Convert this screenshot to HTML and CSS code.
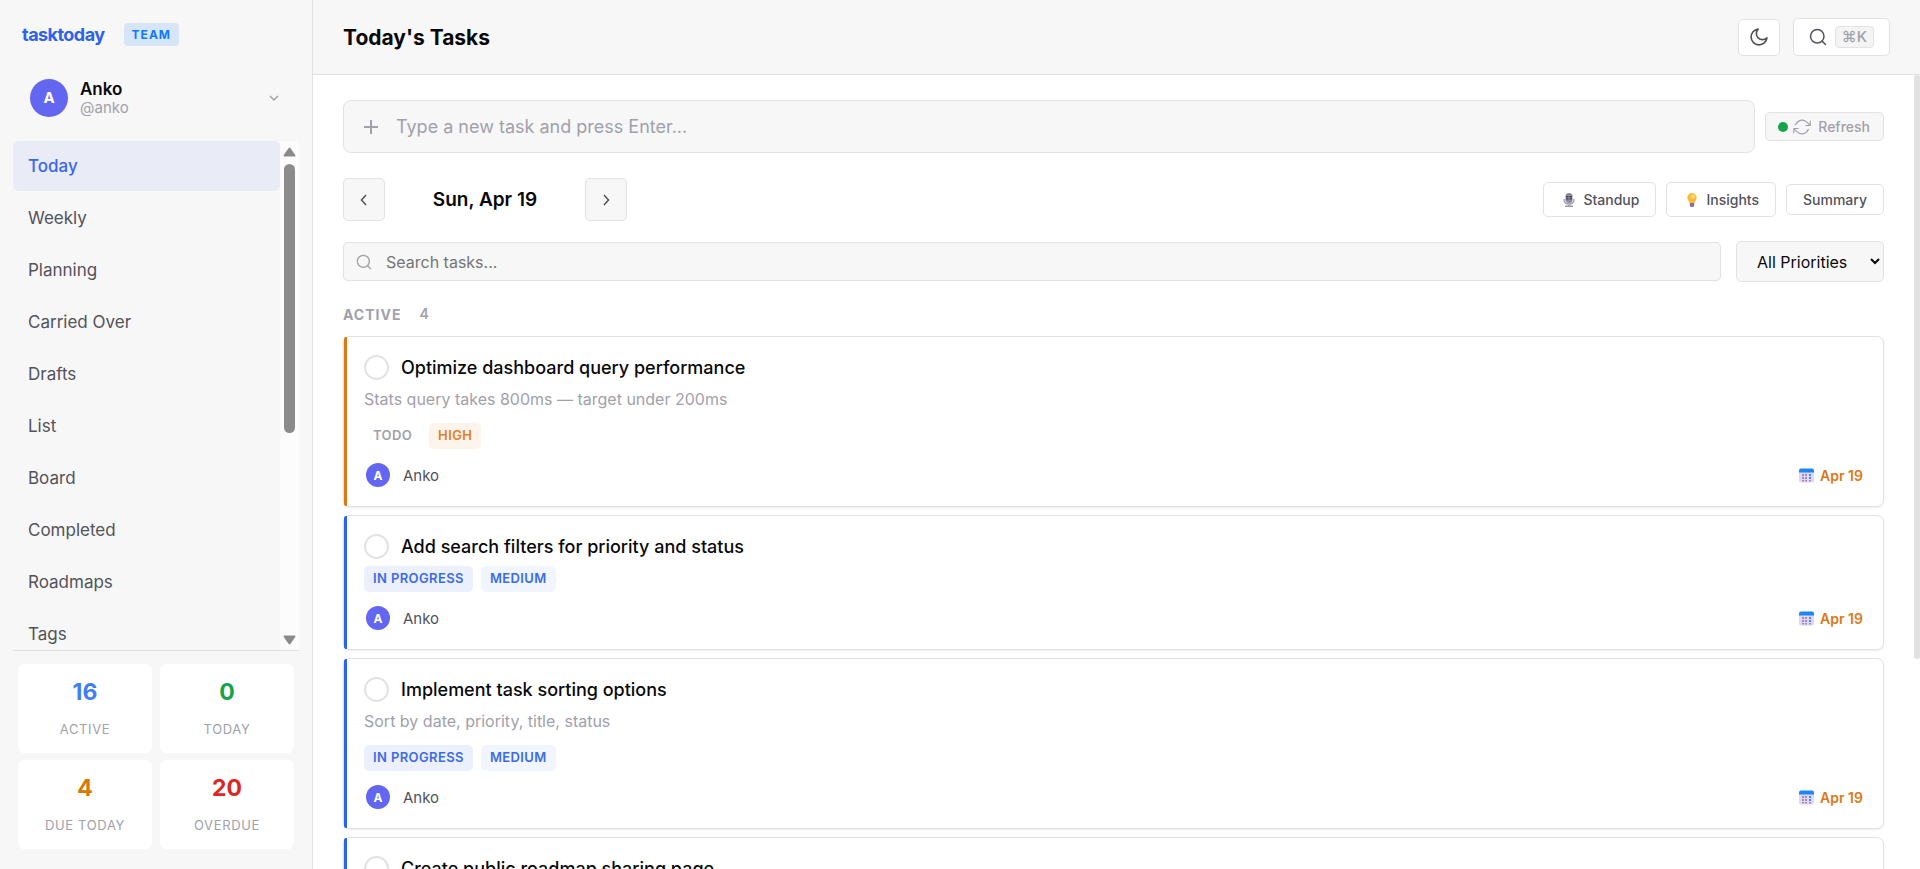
FILE: index.html
```html
<!DOCTYPE html>
<html lang="en">
<head>
    <meta charset="utf-8">
    <meta name="viewport" content="width=device-width, initial-scale=1.0">
    <title>Today's Tasks - tasktoday</title>
    <link rel="stylesheet" href="styles.css">
</head>
<body>

<!-- shared icons -->
<svg class="sprite" aria-hidden="true">
    <symbol id="i-search" viewBox="0 0 24 24"><circle cx="11" cy="11" r="9"/><path d="M22 22l-4.500-4.500"/></symbol>
    <symbol id="i-cal" viewBox="0 0 15 15">
        <rect x="0" y="1" width="15" height="13.500" rx="2" fill="#e3d5f5"/>
        <path d="M0 4.500V2.500Q0 .5 2 .5h11q2 0 2 2v2z" fill="#1b86f5"/>
        <path d="M3 6h2v2H3zM6 6h2v2H6zM3 9h2v2H3zM6 9h2v2H6zM3 12h2v1.500H3zM6 12h2v1.500H6zM10 12h2v1.500h-2z" fill="#9d8fb5"/>
        <path d="M10 6h2v2h-2zM10 9h2v2h-2z" fill="#3f8ef0"/>
    </symbol>
</svg>

<div class="app">

<aside class="sidebar">
    <div class="brand">
        <a href="#" class="logo">tasktoday</a>
        <span class="plan">TEAM</span>
    </div>

    <button class="user" type="button">
        <span class="avatar">A</span>
        <span class="user-info">
            <span class="user-name">Anko</span>
            <span class="user-handle">@anko</span>
        </span>
        <svg class="chev" width="10" height="10" viewBox="0 0 10 10"><path d="M1 3l4 4 4-4"/></svg>
    </button>

    <div class="nav-wrap">
        <nav class="nav">
            <a href="#" class="nav-item active">Today</a>
            <a href="#" class="nav-item">Weekly</a>
            <a href="#" class="nav-item">Planning</a>
            <a href="#" class="nav-item">Carried Over</a>
            <a href="#" class="nav-item">Drafts</a>
            <a href="#" class="nav-item">List</a>
            <a href="#" class="nav-item">Board</a>
            <a href="#" class="nav-item">Completed</a>
            <a href="#" class="nav-item">Roadmaps</a>
            <a href="#" class="nav-item">Tags</a>
        </nav>
        <div class="scrollbar">
            <svg width="13" height="10" viewBox="0 0 13 10"><path d="M6.500 1.500l5 7h-10z"/></svg>
            <div class="scroll-track"><div class="scroll-thumb"></div></div>
            <svg width="13" height="10" viewBox="0 0 13 10"><path d="M6.500 8.500l5-7h-10z"/></svg>
        </div>
    </div>

    <div class="stats">
        <div class="stat"><span class="num blue">16</span><span class="stat-label">ACTIVE</span></div>
        <div class="stat"><span class="num green">0</span><span class="stat-label">TODAY</span></div>
        <div class="stat"><span class="num orange">4</span><span class="stat-label">DUE TODAY</span></div>
        <div class="stat"><span class="num red">20</span><span class="stat-label">OVERDUE</span></div>
    </div>
</aside>

<main class="main">
    <header class="header">
        <h1>Today's Tasks</h1>
        <div class="header-btns">
            <button class="btn theme-btn" type="button" aria-label="Toggle theme">
                <svg class="line" width="20" height="20" viewBox="0 0 24 24"><path d="M21.500 13A9.500 9.500 0 1 1 11 2.500 7.400 7.400 0 0 0 21.500 13z"/></svg>
            </button>
            <button class="btn search-btn" type="button" aria-label="Search">
                <svg class="line" width="18" height="18"><use href="#i-search"/></svg>
                <kbd>⌘K</kbd>
            </button>
        </div>
    </header>

    <div class="body">
    <div class="content">
        <div class="row add-row">
            <div class="add-box">
                <svg class="plus" width="14" height="14" viewBox="0 0 14 14"><path d="M7 0v14M0 7h14"/></svg>
                <input type="text" class="add-input" aria-label="New task" placeholder="Type a new task and press Enter...">
            </div>
            <button class="btn refresh" type="button">
                <span class="dot"></span>
                <svg class="line" width="18" height="18" viewBox="0 0 24 24"><path d="M23 4v6h-6M1 20v-6h6M3.500 9a9 9 0 0 1 14.900-3.400L23 10M1 14l4.600 4.400A9 9 0 0 0 20.500 15"/></svg>
                <span>Refresh</span>
            </button>
        </div>

        <div class="row date-row">
            <button class="btn arrow" type="button" aria-label="Previous day"><svg width="8" height="12" viewBox="0 0 8 12"><path d="M6 1L1.500 6 6 11"/></svg></button>
            <h2 class="date">Sun, Apr 19</h2>
            <button class="btn arrow" type="button" aria-label="Next day"><svg width="8" height="12" viewBox="0 0 8 12"><path d="M2 1l4.500 5L2 11"/></svg></button>
            <div class="tools">
                <button class="btn tool" type="button">
                    <svg width="14" height="16" viewBox="0 0 14 16">
                        <path d="M2 7q0 5 5 5t5-5M7 12v2" fill="none" stroke="#a9a3b5" stroke-width="1.500"/>
                        <rect x="3.500" y="1" width="7" height="10" rx="3.500" fill="#8d8799"/>
                        <path d="M4 4h6v3.500H4z" fill="#45405a"/>
                        <path d="M7 3v6M4 5.800h6" stroke="#a9a3b5" stroke-width=".7"/>
                        <path d="M3 13.500h8v1.500H3z" fill="#9c97a8"/>
                    </svg>
                    Standup
                </button>
                <button class="btn tool" type="button">
                    <svg width="14" height="16" viewBox="0 0 14 16">
                        <path d="M7 1a4.700 4.700 0 0 1 4.700 4.700c0 2.300-2 3.300-2.300 5.300H4.600C4.300 9 2.300 8 2.300 5.700A4.700 4.700 0 0 1 7 1z" fill="#fdb935"/>
                        <circle cx="8" cy="4.500" r="2" fill="#ffe07a"/>
                        <path d="M4.800 11h4.400v2.500Q9.200 15 7 15t-2.200-1.500z" fill="#8c6c9c"/>
                    </svg>
                    Insights
                </button>
                <button class="btn tool small" type="button">Summary</button>
            </div>
        </div>

        <div class="row filter-row">
            <div class="search-box">
                <svg class="line" width="16" height="16"><use href="#i-search"/></svg>
                <input type="search" class="search-input" aria-label="Search tasks" placeholder="Search tasks...">
            </div>
            <select class="priority-select" aria-label="Priority">
                <option>All Priorities</option>
                <option>High</option>
                <option>Medium</option>
                <option>Low</option>
            </select>
        </div>

        <div class="section-head"><h3>ACTIVE</h3><span class="count">4</span></div>

        <div class="tasks">
            <article class="task high">
                <label class="task-title"><input type="checkbox" class="check">Optimize dashboard query performance</label>
                <p class="desc">Stats query takes 800ms — target under 200ms</p>
                <div class="badges"><span class="badge todo">TODO</span><span class="badge b-high">HIGH</span></div>
                <div class="meta">
                    <span class="avatar tiny">A</span><span class="who">Anko</span>
                    <span class="due"><svg width="15" height="15"><use href="#i-cal"/></svg>Apr 19</span>
                </div>
            </article>

            <article class="task">
                <label class="task-title"><input type="checkbox" class="check">Add search filters for priority and status</label>
                <div class="badges"><span class="badge progress">IN PROGRESS</span><span class="badge b-medium">MEDIUM</span></div>
                <div class="meta">
                    <span class="avatar tiny">A</span><span class="who">Anko</span>
                    <span class="due"><svg width="15" height="15"><use href="#i-cal"/></svg>Apr 19</span>
                </div>
            </article>

            <article class="task">
                <label class="task-title"><input type="checkbox" class="check">Implement task sorting options</label>
                <p class="desc">Sort by date, priority, title, status</p>
                <div class="badges"><span class="badge progress">IN PROGRESS</span><span class="badge b-medium">MEDIUM</span></div>
                <div class="meta">
                    <span class="avatar tiny">A</span><span class="who">Anko</span>
                    <span class="due"><svg width="15" height="15"><use href="#i-cal"/></svg>Apr 19</span>
                </div>
            </article>

            <article class="task">
                <label class="task-title"><input type="checkbox" class="check">Create public roadmap sharing page</label>
            </article>
        </div>
    </div>
    <div class="page-scroll"><div class="page-thumb"></div></div>
    </div>
</main>

</div>
</body>
</html>
```
FILE: styles.css
```css
* {box-sizing: border-box;}
body {margin: 0; font-family: Inter, "Liberation Sans", sans-serif; font-size: 16px; color: #09090b; background: #fff;}
button, input, select {font-family: inherit;}
a {text-decoration: none;}
h1, h2, h3, p {margin: 0;}
svg {flex: none;}

.sprite {display: none;}
.line {fill: none; stroke: currentColor; stroke-width: 2; stroke-linecap: round; stroke-linejoin: round;}
.app {display: flex; height: 100vh; overflow: hidden;}

/* sidebar */
.sidebar {width: 313px; flex: none; display: flex; flex-direction: column; padding: 0 13px; background: #f7f7f7; border-right: 1px solid #e2e2e4;}
.brand {display: flex; align-items: center; gap: 19px; height: 68px; padding-left: 9px; flex: none;}
.logo {font-size: 18px; font-weight: 700; letter-spacing: -0.03em; color: #2f62ea;}
.plan {padding: 0 8px; line-height: 23px; border-radius: 4px; font-size: 12px; font-weight: 700; letter-spacing: 1px; color: #0d7bff; background: #d7e6f7;}
.user {display: flex; align-items: center; gap: 12px; height: 59px; margin-bottom: 14px; padding: 0 20px 0 17px; border: 0; background: none; text-align: left; flex: none;}
.avatar {display: flex; align-items: center; justify-content: center; width: 38px; height: 38px; border-radius: 50%; font-size: 15px; font-weight: 700; color: #fff; background: #6366f1; flex: none;}
.avatar.tiny {width: 24px; height: 24px; font-size: 12px;}
.user-info {display: flex; flex-direction: column; flex: 1;}
.user-name {font-size: 17px; line-height: 20px; font-weight: 600; color: #09090b;}
.user-handle {font-size: 15px; line-height: 18px; color: #a1a1aa;}
.chev {fill: none; stroke: #a1a1aa; stroke-width: 1.5;}

.nav-wrap {display: flex; flex: 1; min-height: 0; border-bottom: 1px solid #dfdfe1;}
.nav {display: flex; flex-direction: column; gap: 2px; flex: 1; overflow: hidden;}
.nav-item {padding: 0 15px; height: 50px; line-height: 50px; flex: none; border-radius: 6px; font-size: 17px; color: #52525b;}
.nav-item.active {color: #3b66e8; background: #e9ecf6; font-weight: 500;}
.scrollbar {display: flex; flex-direction: column; align-items: center; width: 19px; padding: 6px 0 5px; background: #fcfcfc; fill: #8b8b8b;}
.scrollbar svg {stroke: #8b8b8b; stroke-linejoin: round; stroke-width: 2;}
.scroll-track {flex: 1; width: 11px; padding: 7px 0;}
.scroll-thumb {height: 58%; border-radius: 6px; background: #8b8b8b;}

.stats {display: grid; grid-template-columns: 1fr 1fr; gap: 7px 8px; padding: 13px 5px 20px; flex: none;}
.stat {display: flex; flex-direction: column; align-items: center; height: 89px; padding-top: 13px; border-radius: 6px; background: #fff;}
.num {font-size: 23px; line-height: 30px; font-weight: 700;}
.stat-label {margin-top: 12px; font-size: 13px; line-height: 20px; letter-spacing: 0.05em; color: #a1a1aa;}
.blue {color: #3f7ff5;}
.green {color: #16a34a;}
.orange {color: #d97706;}
.red {color: #dc2626;}

/* header */
.main {flex: 1; min-width: 0; display: flex; flex-direction: column;}
.header {display: flex; align-items: center; justify-content: space-between; height: 75px; padding: 0 30px; background: #f7f7f7; border-bottom: 1px solid #e2e2e4; flex: none;}
h1 {font-size: 21px; font-weight: 700;}
.header-btns {display: flex; align-items: center; gap: 13px;}
.btn {display: flex; align-items: center; justify-content: center; padding: 0; border: 1px solid #e2e2e4; border-radius: 5px; color: #52525b; background: #fff;}
.theme-btn {width: 42px; height: 37px;}
.search-btn {gap: 8px; height: 38px; padding: 0 15px;}
kbd {padding: 0 6px; line-height: 20px; border: 1px solid #e2e2e4; border-radius: 4px; font-family: inherit; font-size: 15px; font-weight: 500; color: #a1a1aa; background: #f4f4f5;}

/* content */
.body {display: flex; flex: 1; min-height: 0;}
.content {flex: 1; min-width: 0; padding: 25px 30px 0; overflow: hidden;}
.page-scroll {width: 6px; flex: none;}
.page-thumb {height: 73.5%; border-radius: 4px; background: #e2e2e4;}
.row {display: flex; align-items: center;}
.add-row {gap: 10px;}
.add-box {display: flex; align-items: center; flex: 1; gap: 18px; height: 53px; padding: 0 20px; border: 1px solid #e2e2e4; border-radius: 8px; background: #f7f7f7;}
.plus {stroke: #a1a1aa; stroke-width: 2;}
.add-input, .search-input {flex: 1; min-width: 0; height: 30px; padding: 0; border: 0; outline: 0; background: none; color: #09090b;}
.add-input {font-size: 18px;}
.add-input::placeholder {color: #a1a1aa;}
.refresh {height: 29px; padding: 0 13px 0 12px; color: #a1a1aa; background: #f7f7f7; font-size: 14px; font-weight: 500;}
.refresh .line {margin: 0 7px 0 5px; stroke-width: 1.5;}
.dot {width: 10px; height: 10px; border-radius: 50%; background: #16a34a;}

.date-row {margin-top: 25px;}
.arrow {width: 42px; height: 43px; background: #f7f7f7;}
.arrow svg {fill: none; stroke: #52525b; stroke-width: 1.5;}
.date {width: 200px; text-align: center; font-size: 19px; font-weight: 600;}
.tools {display: flex; align-items: center; gap: 10px; margin-left: auto;}
.tool {gap: 7px; height: 35px; padding: 0 16px 0 18px; font-size: 14px; font-weight: 500;}
.tool.small {height: 31px; padding: 0 16px;}

.filter-row {gap: 15px; margin-top: 20px;}
.search-box {display: flex; align-items: center; flex: 1; gap: 14px; height: 39px; padding: 0 12px; border: 1px solid #e2e2e4; border-radius: 5px; color: #a1a1aa; background: #f7f7f7;}
.search-input {font-size: 16px;}
.priority-select {width: 148px; height: 41px; padding: 0 0 0 16px; border: 1px solid #e2e2e4; border-radius: 5px; font-size: 16px; color: #09090b; background: #f7f7f7;}

.section-head {display: flex; align-items: flex-start; gap: 18px; margin-top: 23px; height: 31px; color: #a1a1aa;}
h3 {font-size: 14px; line-height: 20px; font-weight: 700; letter-spacing: 1px;}
.count {font-size: 14px; line-height: 17px; font-weight: 600;}

.tasks {display: flex; flex-direction: column; gap: 8px;}
.task {position: relative; padding: 18px 20px 19px; border: 1px solid #e2e2e4; border-radius: 7px; background: #fff; box-shadow: 0 1px 2px rgba(0, 0, 0, 0.08);}
.task::before {content: ""; position: absolute; left: 0; top: 0; bottom: 0; width: 3px; border-radius: 2px 0 0 2px; background: #2b62ea;}
.task.high::before {background: #d97a16;}
.task-title {display: flex; align-items: center; gap: 12px; height: 25px; margin-bottom: 7px; font-size: 18px; line-height: 24px; font-weight: 500;}
.check {appearance: none; width: 25px; height: 25px; margin: 0; border: 2px solid #e2e2e4; border-radius: 50%; background: #fff;}
.check:checked {background: #2b62ea;}
.desc {margin-bottom: 12px; font-size: 16px; line-height: 24px; color: #a1a1aa;}
.badges {display: flex; gap: 8px; margin-bottom: 14px;}
.badge {padding: 0 9px; height: 26px; line-height: 25px; border-radius: 5px; font-size: 13px; font-weight: 600; letter-spacing: 0.03em;}
.todo {color: #a1a1aa;}
.b-high {color: #e37f1c; background: #fdf4eb;}
.progress {color: #3b6be8; background: #ebf0fc;}
.b-medium {color: #3b6be8; background: #f1f5fe;}
.meta {display: flex; align-items: center; gap: 13px; height: 24px; padding-left: 2px;}
.who {font-size: 15px; color: #52525b;}
.due {display: flex; align-items: center; gap: 6px; margin-left: auto; font-size: 14px; font-weight: 600; color: #d97a16;}
```
